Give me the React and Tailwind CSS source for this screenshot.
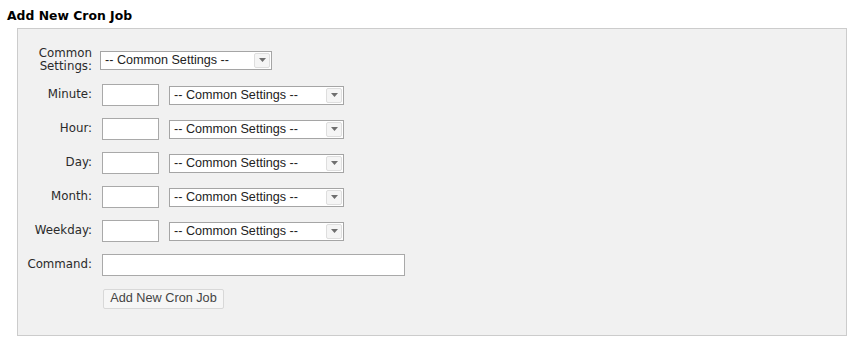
import React from "react";

function FakeSelect({ width }) {
  return (
    <div
      className={`flex h-[19px] items-center justify-between border border-[#a5a5a5] bg-white pl-[4px] pr-[1px] ${width}`}
    >
      <span className="font-['Liberation_Sans',Arial,sans-serif] text-[12.6px] leading-none text-[#222]">
        -- Common Settings --
      </span>
      <span className="flex h-[15px] w-[16px] items-center justify-center rounded-[2px] border border-[#dedede] bg-[#f5f5f5]">
        <svg width="7" height="4" viewBox="0 0 7 4">
          <path d="M0 0H7L3.5 4Z" fill="#6f6f6f" />
        </svg>
      </span>
    </div>
  );
}

function TimeRow({ label }) {
  return (
    <div className="flex h-[34px] items-center">
      <div className="w-[74px] text-right">{label}</div>
      <div className="ml-[10px] h-[22px] w-[57px] border border-[#a9a9a9] bg-white" />
      <div className="ml-[10px]">
        <FakeSelect width="w-[175px]" />
      </div>
    </div>
  );
}

export default function App() {
  const rows = ["Minute:", "Hour:", "Day:", "Month:", "Weekday:"];

  return (
    <div className="min-h-[343px] bg-white font-['DejaVu_Sans',Verdana,sans-serif] text-[11.8px] text-[#2a2a2a]">
      <h2 className="px-[7px] pt-[8px] pb-[5px] text-[12.4px] font-bold leading-[15px] text-black">
        Add New Cron Job
      </h2>
      <div className="ml-[17px] mr-[6px] border border-[#cccccc] bg-[#f1f1f1] pt-[13px] pb-[19px]">
        <div className="flex h-[36px] items-center">
          <div className="w-[74px] text-right leading-[13px]">
            Common
            <br />
            Settings:
          </div>
          <div className="ml-[8px]">
            <FakeSelect width="w-[172px]" />
          </div>
        </div>

        {rows.map((r) => (
          <TimeRow key={r} label={r} />
        ))}

        <div className="flex h-[34px] items-center">
          <div className="w-[74px] text-right">Command:</div>
          <div className="ml-[10px] h-[22px] w-[303px] border border-[#a9a9a9] bg-white" />
        </div>

        <div className="flex h-[34px] items-center">
          <div className="ml-[85px] flex h-[20px] w-[121px] items-center justify-center rounded-[2px] border border-[#d8d8d8] bg-[#f6f6f6] font-['Liberation_Sans',Arial,sans-serif] text-[12.7px] text-[#444]">
            Add New Cron Job
          </div>
        </div>
      </div>
    </div>
  );
}
